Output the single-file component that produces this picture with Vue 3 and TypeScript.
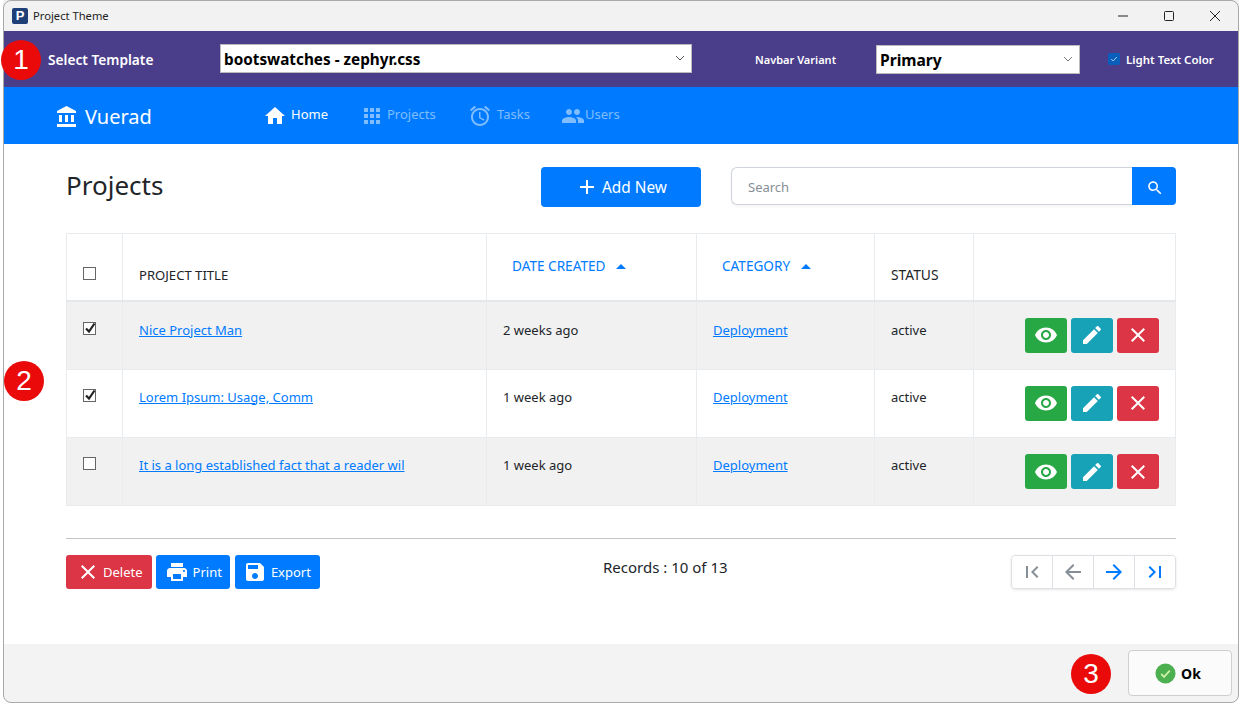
<script setup lang="ts">
interface Project {
  title: string
  created: string
  category: string
  status: string
  checked: boolean
}

const icons: Record<string, string> = {
  bank: 'M4 10v7h3v-7H4zm6 0v7h3v-7h-3zM2 22h19v-3H2v3zm14-12v7h3v-7h-3zm-4.5-9L2 6v2h19V6l-9.5-5z',
  home: 'M10 20v-6h4v6h5v-8h3L12 3 2 12h3v8z',
  apps: 'M4 8h4V4H4v4zm6 12h4v-4h-4v4zm-6 0h4v-4H4v4zm0-6h4v-4H4v4zm6 0h4v-4h-4v4zm6-10v4h4V4h-4zm-6 4h4V4h-4v4zm6 6h4v-4h-4v4zm0 6h4v-4h-4v4z',
  alarm: 'M22 5.72l-4.6-3.86-1.29 1.53 4.6 3.86L22 5.72zM7.88 3.39L6.6 1.86 2 5.71l1.29 1.53 4.59-3.85zM12.5 8H11v6l4.75 2.85.75-1.23-4-2.37V8zM12 4c-4.97 0-9 4.03-9 9s4.03 9 9 9 9-4.03 9-9-4.03-9-9-9zm0 16c-3.87 0-7-3.13-7-7s3.13-7 7-7 7 3.13 7 7-3.13 7-7 7z',
  people: 'M16 11c1.66 0 2.99-1.34 2.99-3S17.66 5 16 5c-1.66 0-3 1.34-3 3s1.34 3 3 3zm-8 0c1.66 0 2.99-1.34 2.99-3S9.66 5 8 5C6.34 5 5 6.34 5 8s1.34 3 3 3zm0 2c-2.33 0-7 1.17-7 3.5V19h14v-2.5c0-2.33-4.67-3.5-7-3.5zm8 0c-.29 0-.62.02-.97.05 1.16.84 1.97 1.97 1.97 3.45V19h6v-2.5c0-2.33-4.67-3.5-7-3.5z',
  add: 'M19 13h-6v6h-2v-6H5v-2h6V5h2v6h6v2z',
  search: 'M15.5 14h-.79l-.28-.27C15.41 12.59 16 11.11 16 9.5 16 5.91 13.09 3 9.5 3S3 5.91 3 9.5 5.91 16 9.5 16c1.61 0 3.09-.59 4.23-1.57l.27.28v.79l5 4.99L20.49 19l-4.99-5zm-6 0C7.01 14 5 11.99 5 9.5S7.01 5 9.5 5 14 7.01 14 9.5 11.99 14 9.5 14z',
  eye: 'M12 4.5C7 4.5 2.73 7.61 1 12c1.73 4.39 6 7.5 11 7.5s9.27-3.11 11-7.5c-1.73-4.39-6-7.5-11-7.5zM12 17c-2.76 0-5-2.24-5-5s2.24-5 5-5 5 2.24 5 5-2.24 5-5 5zm0-8c-1.66 0-3 1.34-3 3s1.34 3 3 3 3-1.34 3-3-1.34-3-3-3z',
  edit: 'M3 17.25V21h3.75L17.81 9.94l-3.75-3.75L3 17.25zM20.71 7.04c.39-.39.39-1.02 0-1.41l-2.34-2.34c-.39-.39-1.02-.39-1.41 0l-1.83 1.83 3.75 3.75 1.83-1.83z',
  close: 'M19 6.41L17.59 5 12 10.59 6.41 5 5 6.41 10.59 12 5 17.59 6.41 19 12 13.41 17.59 19 19 17.59 13.41 12z',
  print: 'M19 8H5c-1.66 0-3 1.34-3 3v6h4v4h12v-4h4v-6c0-1.66-1.34-3-3-3zm-3 11H8v-5h8v5zm3-7c-.55 0-1-.45-1-1s.45-1 1-1 1 .45 1 1-.45 1-1 1zm-1-9H6v4h12V3z',
  save: 'M17 3H5c-1.11 0-2 .9-2 2v14c0 1.1.89 2 2 2h14c1.1 0 2-.9 2-2V7l-4-4zm-5 16c-1.66 0-3-1.34-3-3s1.34-3 3-3 3 1.34 3 3-1.34 3-3 3zm3-10H5V5h10v4z',
  first: 'M18.41 16.59L13.82 12l4.59-4.59L17 6l-6 6 6 6zM6 6h2v12H6z',
  last: 'M5.59 7.41L10.18 12l-4.59 4.59L7 18l6-6-6-6zM16 6h2v12h-2z',
  back: 'M20 11H7.83l5.59-5.59L12 4l-8 8 8 8 1.41-1.41L7.83 13H20v-2z',
  forward: 'M12 4l-1.41 1.41L16.17 11H4v2h12.17l-5.58 5.59L12 20l8-8z'
}

const navItems = [
  { label: 'Home', icon: 'home', active: true },
  { label: 'Projects', icon: 'apps', active: false },
  { label: 'Tasks', icon: 'alarm', active: false },
  { label: 'Users', icon: 'people', active: false }
]

const projects: Project[] = [
  { title: 'Nice Project Man', created: '2 weeks ago', category: 'Deployment', status: 'active', checked: true },
  { title: 'Lorem Ipsum: Usage, Comm', created: '1 week ago', category: 'Deployment', status: 'active', checked: true },
  { title: 'It is a long established fact that a reader wil', created: '1 week ago', category: 'Deployment', status: 'active', checked: false }
]

const rowActions = [
  { icon: 'eye', cls: 'green' },
  { icon: 'edit', cls: 'teal' },
  { icon: 'close', cls: 'red' }
]

const pager = [
  { icon: 'first', on: false },
  { icon: 'back', on: false },
  { icon: 'forward', on: true },
  { icon: 'last', on: true }
]
</script>

<template>
  <div class="window">
    <header class="titlebar">
      <span class="app-logo">P</span>
      <span class="app-name">Project Theme</span>
      <div class="win-controls">
        <svg viewBox="0 0 12 12" width="12" height="12"><path d="M1 6h10" stroke="#222" fill="none" /></svg>
        <svg viewBox="0 0 12 12" width="12" height="12"><rect x="1.5" y="1.5" width="9" height="9" rx="1" stroke="#222" fill="none" /></svg>
        <svg viewBox="0 0 12 12" width="12" height="12"><path d="M1 1l10 10M11 1L1 11" stroke="#222" fill="none" /></svg>
      </div>
    </header>

    <section class="theme-bar">
      <label class="template-label">Select Template</label>
      <div class="fake-select template-select">
        <span>bootswatches - zephyr.css</span>
        <svg viewBox="0 0 10 6" width="10" height="6"><path d="M1 1l4 4 4-4" stroke="#555" fill="none" /></svg>
      </div>
      <label class="variant-label">Navbar Variant</label>
      <div class="fake-select variant-select">
        <span>Primary</span>
        <svg viewBox="0 0 10 6" width="10" height="6"><path d="M1 1l4 4 4-4" stroke="#777" fill="none" /></svg>
      </div>
      <span class="light-check">
        <svg viewBox="0 0 10 10" width="8" height="8"><path d="M1.5 5l2.5 2.5 4.5-5" stroke="#cfe3fb" fill="none" /></svg>
      </span>
      <label class="light-label">Light Text Color</label>
    </section>

    <nav class="navbar">
      <div class="brand">
        <svg viewBox="0 0 24 24" width="24" height="24"><path :d="icons.bank" fill="#fff" /></svg>
        <span>Vuerad</span>
      </div>
      <div class="nav-links">
        <a v-for="item in navItems" :key="item.label" class="nav-link" :class="[item.icon, { active: item.active }]">
          <svg viewBox="0 0 24 24" width="24" height="24"><path :d="icons[item.icon]" fill="currentColor" /></svg>
          <span>{{ item.label }}</span>
        </a>
      </div>
    </nav>

    <main class="content">
      <div class="page-head">
        <h1>Projects</h1>
        <button class="add-btn">
          <svg viewBox="0 0 24 24" width="24" height="24"><path :d="icons.add" fill="#fff" /></svg>
          Add New
        </button>
        <div class="search">
          <div class="search-input">Search</div>
          <button class="search-btn">
            <svg viewBox="0 0 24 24" width="18" height="18"><path :d="icons.search" fill="#fff" /></svg>
          </button>
        </div>
      </div>

      <table class="grid">
        <colgroup>
          <col style="width: 56px" />
          <col style="width: 364px" />
          <col style="width: 210px" />
          <col style="width: 178px" />
          <col style="width: 99px" />
          <col />
        </colgroup>
        <thead>
          <tr>
            <th class="check-cell"><span class="check"></span></th>
            <th class="title-col">PROJECT TITLE</th>
            <th class="sortable">DATE CREATED <i class="caret"></i></th>
            <th class="sortable">CATEGORY <i class="caret"></i></th>
            <th class="status">STATUS</th>
            <th></th>
          </tr>
        </thead>
        <tbody>
          <tr v-for="(p, i) in projects" :key="i" :class="{ odd: i % 2 === 0 }">
            <td class="check-cell">
              <span class="check">
                <svg v-if="p.checked" viewBox="0 0 12 12" width="12" height="12"><path d="M2 6.5l3 3 5.5-8" stroke="#222" stroke-width="2.2" fill="none" /></svg>
              </span>
            </td>
            <td><a class="link">{{ p.title }}</a></td>
            <td>{{ p.created }}</td>
            <td><a class="link">{{ p.category }}</a></td>
            <td>{{ p.status }}</td>
            <td class="actions">
              <button v-for="a in rowActions" :key="a.icon" class="act-btn" :class="a.cls">
                <svg viewBox="0 0 24 24" width="24" height="24"><path :d="icons[a.icon]" fill="#fff" /></svg>
              </button>
            </td>
          </tr>
        </tbody>
      </table>

      <div class="table-foot">
        <div class="foot-btns">
          <button class="foot-btn red delete">
            <svg viewBox="0 0 24 24" width="24" height="24"><path :d="icons.close" fill="#fff" /></svg>
            Delete
          </button>
          <button class="foot-btn blue print">
            <svg viewBox="0 0 24 24" width="24" height="24"><path :d="icons.print" fill="#fff" /></svg>
            Print
          </button>
          <button class="foot-btn blue export">
            <svg viewBox="0 0 24 24" width="24" height="24"><path :d="icons.save" fill="#fff" /></svg>
            Export
          </button>
        </div>
        <div class="records">Records : 10 of 13</div>
        <div class="pager">
          <button v-for="b in pager" :key="b.icon" class="page-btn" :class="{ on: b.on }">
            <svg viewBox="0 0 24 24" width="24" height="24"><path :d="icons[b.icon]" fill="currentColor" /></svg>
          </button>
        </div>
      </div>
    </main>

    <footer class="dialog-foot">
      <button class="ok-btn">
        <svg viewBox="0 0 22 22" width="21" height="21">
          <circle cx="11" cy="11" r="10.5" fill="#4caf50" />
          <path d="M6.5 11.5l3 3 6-6.5" stroke="#c8f0a0" stroke-width="2" fill="none" />
        </svg>
        Ok
      </button>
    </footer>

    <span class="badge badge-1">1</span>
    <span class="badge badge-2">2</span>
    <span class="badge badge-3">3</span>
  </div>
</template>

<style scoped>
.window {
  position: relative;
  box-sizing: border-box;
  width: 1239px;
  height: 703px;
  margin: 0;
  padding-left: 3px;
  display: flex;
  flex-direction: column;
  font-family: "Noto Sans", "Open Sans", sans-serif;
  color: #212529;
  background: #fff;
  overflow: hidden;
}

.window::after {
  content: "";
  position: absolute;
  left: 3px;
  top: 0;
  right: 0;
  bottom: 0;
  border: 1px solid #a9a9a9;
  border-radius: 8px;
  pointer-events: none;
}

.titlebar {
  height: 31px;
  flex-shrink: 0;
  display: flex;
  align-items: center;
  padding-left: 9px;
  background: #f2f2f2;
}

.app-logo {
  width: 16px;
  height: 16px;
  border-radius: 2px;
  background: #1f3f78;
  color: #fff;
  font: bold 13px/16px "Liberation Sans", sans-serif;
  text-align: center;
}

.app-name {
  margin-left: 5px;
  font-size: 11.2px;
  color: #222;
}

.win-controls {
  margin-left: auto;
  display: flex;
  gap: 34px;
  padding-right: 18px;
}

.theme-bar {
  height: 56px;
  flex-shrink: 0;
  display: flex;
  align-items: center;
  background: #4a3d8a;
  color: #fff;
  font-weight: 600;
}

.template-label {
  margin-left: 45px;
  width: 172px;
  font-size: 13.7px;
}

.fake-select {
  box-sizing: border-box;
  display: flex;
  align-items: center;
  justify-content: space-between;
  background: #fff;
  color: #000;
  border: 1px solid #bbb;
  font-size: 15.3px;
  font-weight: 700;
  padding: 0 3px 0 3px;
}

.fake-select span {
  position: relative;
  top: 1px;
}

.fake-select svg {
  margin-right: 3px;
}

.template-select {
  width: 472px;
  height: 29px;
  margin-top: -2px;
}

.variant-label {
  margin-left: 63px;
  width: 121px;
  font-size: 11px;
}

.variant-select {
  width: 204px;
  height: 29px;
  font-size: 15.6px;
}

.light-check {
  margin-left: 28px;
  width: 12px;
  height: 12px;
  border-radius: 2px;
  background: #0a5ebc;
  display: flex;
  align-items: center;
  justify-content: center;
}

.light-label {
  margin-left: 6px;
  font-size: 11.5px;
}

.navbar {
  height: 57px;
  flex-shrink: 0;
  display: flex;
  background: #007bff;
  color: #fff;
}

.brand {
  margin-left: 52px;
  width: 208px;
  display: flex;
  align-items: center;
  gap: 6px;
  font-size: 20px;
  padding-top: 2px;
}

.nav-links {
  display: flex;
  align-items: flex-start;
}

.nav-link {
  display: flex;
  align-items: center;
  margin-top: 17px;
  font-size: 13px;
  line-height: 22px;
  color: rgba(255, 255, 255, 0.5);
}

.nav-link span {
  position: relative;
  top: -2px;
}

.nav-link.active {
  color: #fff;
}

.nav-link.home {
  width: 97px;
  gap: 4px;
}

.nav-link.apps {
  width: 108px;
  gap: 3px;
}

.nav-link.alarm {
  width: 93px;
  gap: 5px;
}

.nav-link.people {
  gap: 0;
}

.content {
  flex: 1;
  padding: 23px 62px 0 63px;
  min-height: 0;
}

.page-head {
  display: flex;
  align-items: flex-start;
  height: 66px;
}

h1 {
  margin: 0;
  width: 475px;
  font-size: 26px;
  font-weight: 400;
  line-height: 37px;
}

button {
  font-family: inherit;
  border: none;
  cursor: pointer;
}

.add-btn {
  width: 160px;
  height: 40px;
  display: flex;
  align-items: center;
  justify-content: center;
  gap: 3px;
  background: #007bff;
  color: #fff;
  border-radius: 4px;
  font-size: 15.4px;
}

.search {
  margin-left: 30px;
  width: 445px;
  display: flex;
}

.search-input {
  flex: 1;
  box-sizing: border-box;
  height: 38px;
  padding-left: 16px;
  border: 1px solid #ced4da;
  border-right: none;
  border-radius: 6px 0 0 6px;
  font-size: 13px;
  line-height: 38px;
  color: #868e96;
  box-shadow: 0 2px 3px rgba(0, 0, 0, 0.04);
}

.search-btn {
  width: 44px;
  height: 38px;
  padding: 3px 0 0 1px;
  display: flex;
  align-items: center;
  justify-content: center;
  background: #007bff;
  border-radius: 0 4px 4px 0;
}

.grid {
  width: 1110px;
  table-layout: fixed;
  border-collapse: collapse;
  font-size: 13px;
}

.grid th,
.grid td {
  border: 1px solid #e9ecef;
  text-align: left;
  box-sizing: border-box;
}

.grid th {
  height: 67px;
  padding: 28px 16px 0;
  border-bottom: 2px solid #e5e8eb;
  font-weight: 400;
  line-height: 26px;
  vertical-align: top;
}

.grid th.title-col {
  font-size: 13.1px;
}

.grid th.sortable {
  padding: 19px 25px 0;
  color: #007bff;
  font-size: 13.6px;
}

.grid th.status {
  font-size: 13.8px;
}

.caret {
  display: inline-block;
  width: 0;
  height: 0;
  margin-left: 7px;
  border-left: 5px solid transparent;
  border-right: 5px solid transparent;
  border-bottom: 5px solid #007bff;
  vertical-align: 2px;
}

.grid td {
  height: 68.5px;
  padding: 18px 16px 0;
  line-height: 20px;
  vertical-align: top;
}

.grid tbody tr + tr td {
  padding-top: 17px;
}

.grid tbody tr:last-child td {
  height: 67.5px;
}

.grid tr.odd td {
  background: #f1f1f2;
}

.grid .check-cell {
  padding: 33px 0 0 16px;
  line-height: 0;
}

.grid tbody td.check-cell {
  padding-top: 20px;
}

.grid tbody tr + tr td.check-cell {
  padding-top: 19px;
}

.check {
  box-sizing: border-box;
  display: flex;
  align-items: center;
  justify-content: center;
  width: 13px;
  height: 13px;
  border: 1px solid #666;
  background: #fff;
}

.check svg {
  flex-shrink: 0;
  overflow: visible;
}

.link {
  color: #007bff;
  text-decoration: underline;
}

.grid tbody tr td.actions {
  padding: 16px 16px 0 0;
  text-align: right;
  font-size: 0;
}

.act-btn {
  width: 42px;
  height: 35px;
  padding: 0;
  margin-left: 4px;
  border-radius: 3px;
  display: inline-flex;
  align-items: center;
  justify-content: center;
}

.green {
  background: #28a745;
}

.teal {
  background: #17a2b8;
}

.red {
  background: #dc3545;
}

.blue {
  background: #007bff;
}

.table-foot {
  margin-top: 32px;
  padding-top: 16px;
  border-top: 1px solid #c4c4c4;
  display: flex;
  width: 1110px;
  align-items: flex-start;
}

.foot-btns {
  display: flex;
  gap: 4px;
  width: 500px;
}

.foot-btn {
  height: 34px;
  display: flex;
  align-items: center;
  border-radius: 3px;
  color: #fff;
  font-size: 13px;
}

.foot-btn.delete {
  padding: 0 9px 0 10px;
  gap: 3px;
}

.foot-btn.print {
  padding: 0 8px 0 9px;
  gap: 4px;
}

.foot-btn.export {
  margin-left: 1px;
  padding: 0 9px 0 8px;
  gap: 4px;
}

.records {
  flex: 1;
  padding-left: 37px;
  font-size: 15px;
  line-height: 24px;
}

.pager {
  display: flex;
  width: 165px;
  height: 34px;
  box-sizing: border-box;
  border: 1px solid #dcdfe3;
  border-radius: 4px;
  box-shadow: 0 1px 3px rgba(0, 0, 0, 0.1);
}

.page-btn {
  flex: 1;
  padding: 0;
  display: flex;
  align-items: center;
  justify-content: center;
  background: #fff;
  color: #868e96;
  border-right: 1px solid #dcdfe3;
}

.page-btn:first-child {
  border-radius: 4px 0 0 4px;
}

.page-btn:last-child {
  border-right: none;
  border-radius: 0 4px 4px 0;
}

.page-btn.on {
  color: #007bff;
}

.dialog-foot {
  height: 59px;
  flex-shrink: 0;
  display: flex;
  align-items: flex-start;
  justify-content: flex-end;
  padding: 6px 7px 0 0;
  box-sizing: border-box;
  background: #f3f3f3;
  border-radius: 0 0 8px 8px;
}

.ok-btn {
  box-sizing: border-box;
  width: 104px;
  height: 46px;
  padding: 0 4px 0 0;
  display: flex;
  align-items: center;
  justify-content: center;
  gap: 5px;
  background: #fbfbfb;
  border: 1px solid #cfcfcf;
  border-radius: 4px;
  font-size: 14px;
  font-weight: 700;
  color: #000;
}

.badge {
  position: absolute;
  z-index: 2;
  width: 40px;
  height: 40px;
  border-radius: 50%;
  background: #eb0a0a;
  color: #fff;
  font: 28px/40px "Liberation Sans", sans-serif;
  text-align: center;
}

.badge-1 {
  left: 1px;
  top: 40px;
}

.badge-2 {
  left: 4px;
  top: 361px;
}

.badge-3 {
  left: 1071px;
  top: 654px;
}
</style>

<style>
body {
  margin: 0;
  background: #fff;
}
</style>
